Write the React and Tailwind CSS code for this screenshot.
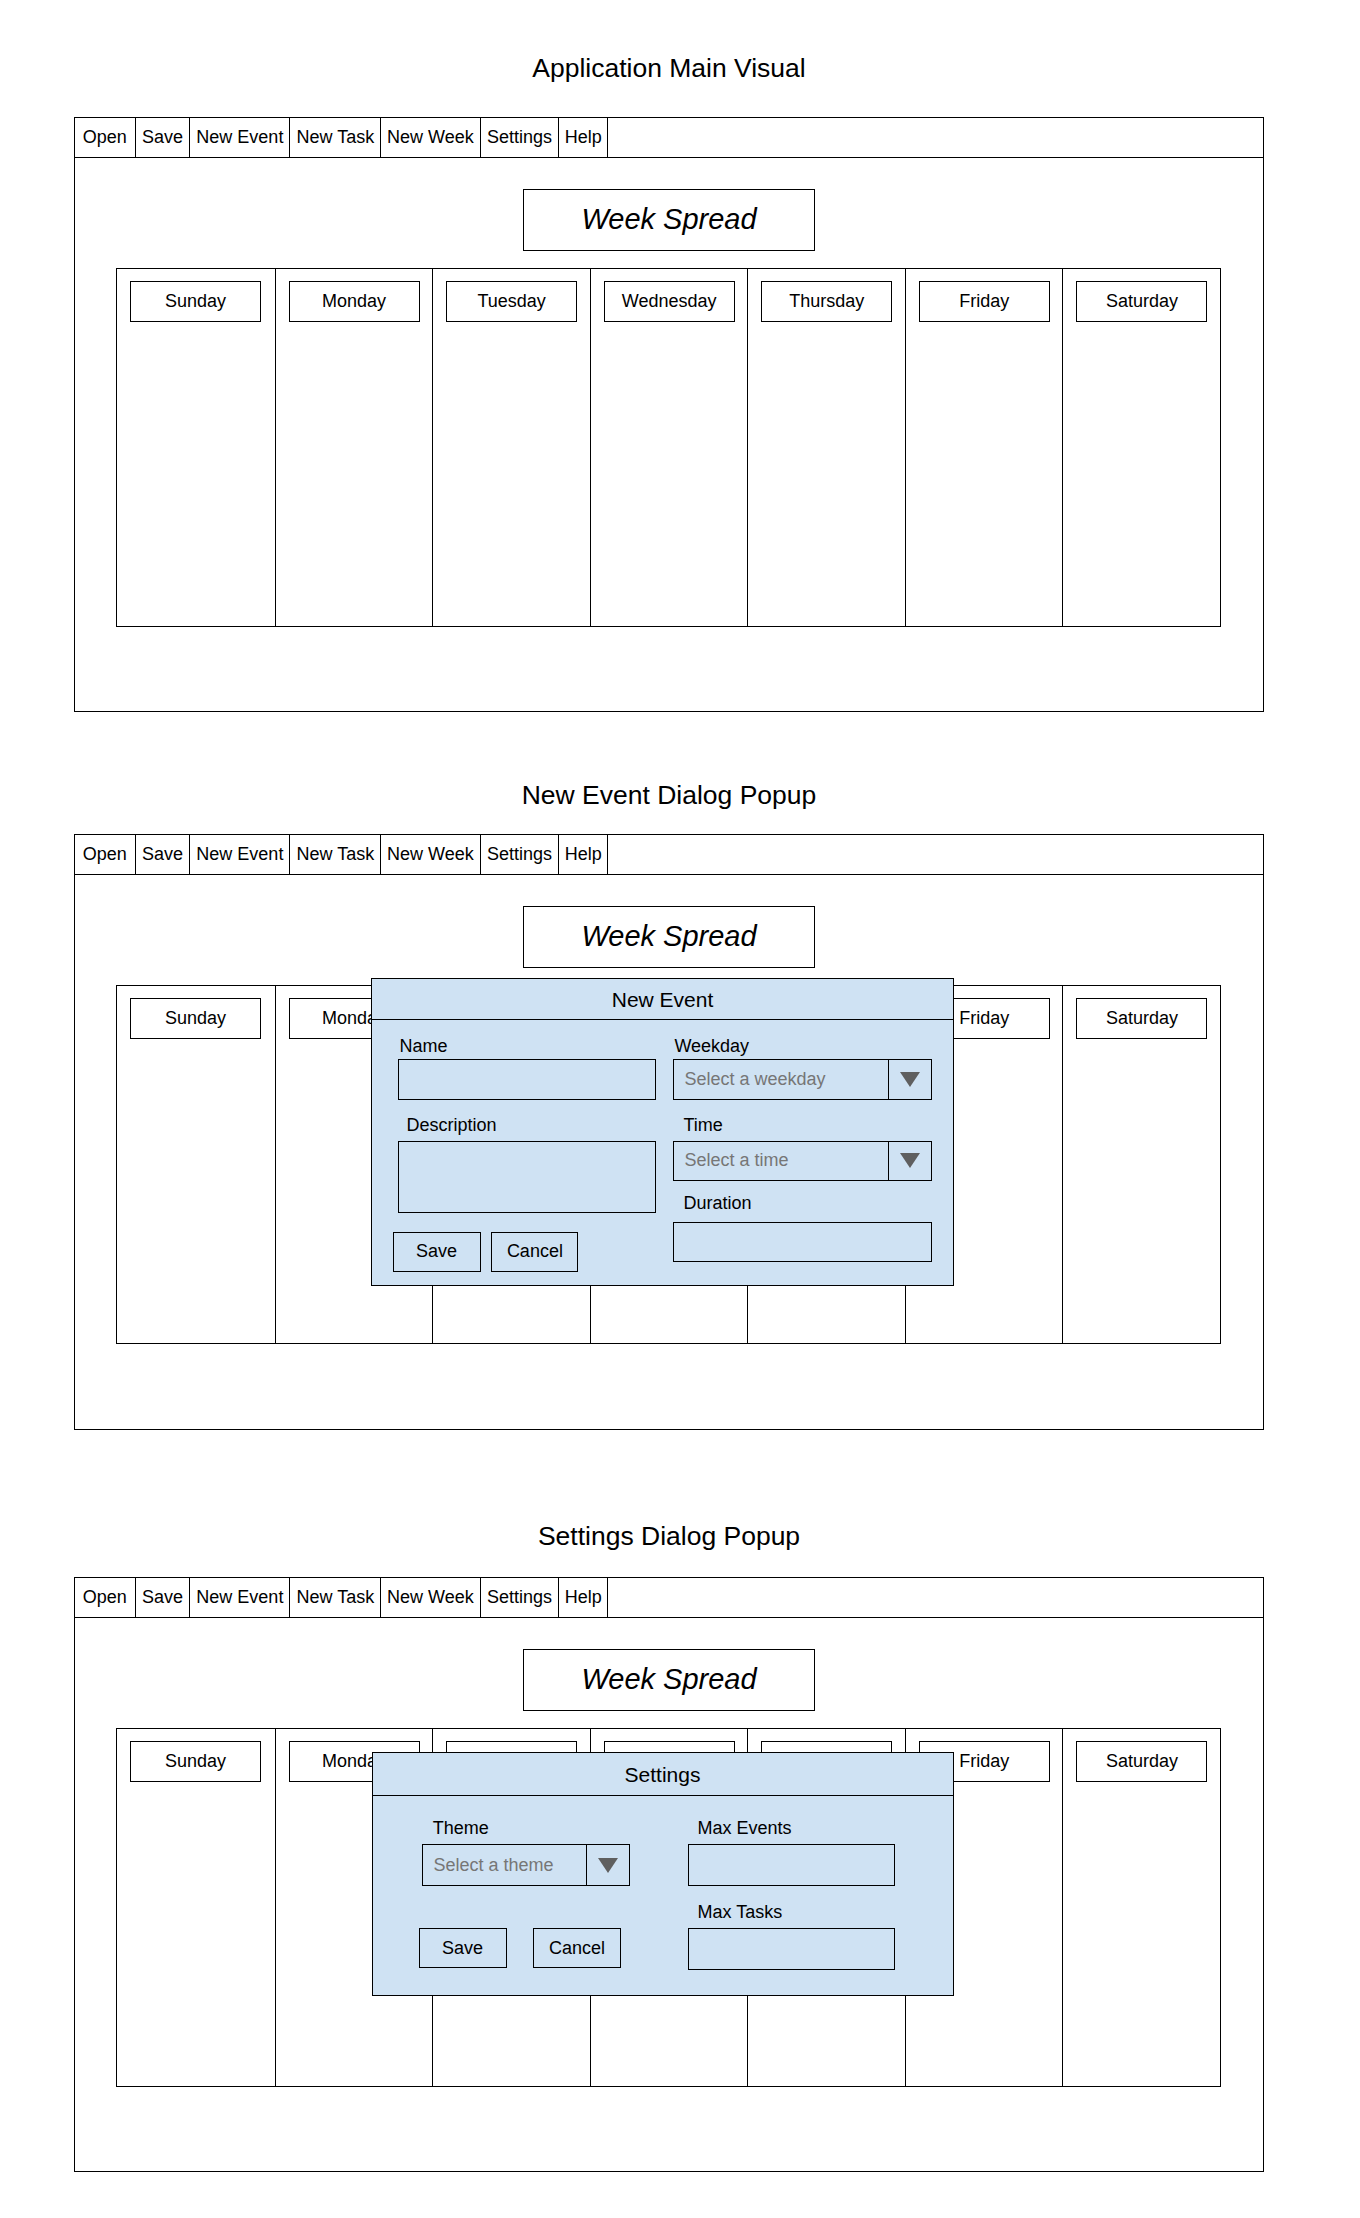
import React from "react";

const menu = [
  ["Open", "w-[60.7px]"],
  ["Save", "w-[54.7px]"],
  ["New Event", "w-[100px]"],
  ["New Task", "w-[91px]"],
  ["New Week", "w-[99.2px]"],
  ["Settings", "w-[78.8px]"],
  ["Help", "w-[48.6px]"],
];

const days = ["Sunday", "Monday", "Tuesday", "Wednesday", "Thursday", "Friday", "Saturday"];

function Triangle() {
  return (
    <svg width="20" height="15" viewBox="0 0 20 15">
      <polygon points="0,0 20,0 10,15" fill="#5f5f5f" />
    </svg>
  );
}

function Select({ placeholder, className }) {
  return (
    <div className={`flex border border-black ${className}`}>
      <div className="flex-1 flex items-center pl-[10px] text-[18px] text-[#767676] whitespace-nowrap overflow-hidden">
        {placeholder}
      </div>
      <div className="w-[43px] border-l border-black flex items-center justify-center">
        <Triangle />
      </div>
    </div>
  );
}

function Button({ children, className }) {
  return (
    <div className={`border border-black flex items-center justify-center text-[18px] ${className}`}>
      {children}
    </div>
  );
}

function Label({ children, className }) {
  return <div className={`h-[20px] leading-[20px] text-[18px] whitespace-nowrap ${className}`}>{children}</div>;
}

function Frame({ height, children }) {
  return (
    <div className={`relative ml-[74px] w-[1190px] ${height} border border-black`}>
      <div className="flex h-[40px] border-b border-black">
        {menu.map(([label, w]) => (
          <div
            key={label}
            className={`${w} h-full border-r border-black flex items-center justify-center text-[18px] whitespace-nowrap`}
          >
            {label}
          </div>
        ))}
      </div>
      <div className="mt-[31px] mx-auto w-[292px] h-[62px] border border-black flex items-center justify-center italic text-[29px]">
        Week Spread
      </div>
      <div className="mt-[17px] ml-[41px] w-[1105px] h-[359px] border border-black grid grid-cols-7">
        {days.map((d, i) => (
          <div key={d} className={i ? "border-l border-black" : ""}>
            <div className="mt-[12px] ml-[13px] w-[131px] h-[41px] border border-black flex items-center justify-center text-[18px]">
              {d}
            </div>
          </div>
        ))}
      </div>
      {children}
    </div>
  );
}

function Title({ children, className }) {
  return (
    <div className={`ml-[74px] w-[1190px] h-[30px] leading-[30px] text-[26.5px] text-center ${className}`}>
      {children}
    </div>
  );
}

function NewEventDialog() {
  return (
    <div className="absolute left-[296px] top-[143.3px] w-[583px] h-[308px] border border-black bg-[#cfe2f3] flex flex-col">
      <div className="h-[41px] shrink-0 border-b border-black flex items-center justify-center text-[21px]">
        New Event
      </div>
      <div className="flex">
        <div className="ml-[25.5px] w-[258.3px] flex flex-col">
          <Label className="mt-[15.3px] pl-[2px]">Name</Label>
          <div className="mt-[3.7px] h-[41px] border border-black" />
          <Label className="mt-[14.3px] pl-[9px]">Description</Label>
          <div className="mt-[6.1px] h-[72.6px] border border-black" />
          <div className="mt-[18.4px] -ml-[5px] flex">
            <Button className="w-[88px] h-[40.6px]">Save</Button>
            <Button className="ml-[10.8px] w-[87.2px] h-[40.6px]">Cancel</Button>
          </div>
        </div>
        <div className="ml-[17.6px] w-[258.4px] flex flex-col">
          <Label className="mt-[15.3px] pl-[1px]">Weekday</Label>
          <Select placeholder="Select a weekday" className="mt-[3.7px] h-[41px]" />
          <Label className="mt-[14.3px] pl-[10px]">Time</Label>
          <Select placeholder="Select a time" className="mt-[6.1px] h-[40.6px]" />
          <Label className="mt-[12px] pl-[10px]">Duration</Label>
          <div className="mt-[8.4px] h-[40.6px] border border-black" />
        </div>
      </div>
    </div>
  );
}

function SettingsDialog() {
  return (
    <div className="absolute left-[296.5px] top-[174px] w-[582px] h-[244px] border border-black bg-[#cfe2f3] flex flex-col">
      <div className="h-[43px] shrink-0 border-b border-black flex items-center justify-center pt-[2px] text-[21px]">
        Settings
      </div>
      <div className="flex">
        <div className="ml-[49.9px] w-[207.4px] flex flex-col">
          <Label className="mt-[22px] pl-[10.3px]">Theme</Label>
          <Select placeholder="Select a theme" className="mt-[6px] h-[42px]" />
          <div className="mt-[42px] -ml-[3.8px] flex">
            <Button className="w-[88px] h-[40.4px]">Save</Button>
            <Button className="ml-[26.8px] w-[87.2px] h-[40.4px]">Cancel</Button>
          </div>
        </div>
        <div className="ml-[58.6px] w-[206.2px] flex flex-col">
          <Label className="mt-[22px] pl-[9.1px]">Max Events</Label>
          <div className="mt-[6px] h-[42px] border border-black" />
          <Label className="mt-[16px] pl-[9.1px]">Max Tasks</Label>
          <div className="mt-[6px] h-[42px] border border-black" />
        </div>
      </div>
    </div>
  );
}

export default function App() {
  return (
    <div className="w-[1360px] h-[2218px] bg-white text-black font-['Liberation_Sans',Arial,sans-serif] pt-[53px] overflow-hidden">
      <Title>Application Main Visual</Title>
      <div className="mt-[34px]">
        <Frame height="h-[595px]" />
      </div>
      <Title className="mt-[68px]">New Event Dialog Popup</Title>
      <div className="mt-[24px]">
        <Frame height="h-[596px]">
          <NewEventDialog />
        </Frame>
      </div>
      <Title className="mt-[91px]">Settings Dialog Popup</Title>
      <div className="mt-[26px]">
        <Frame height="h-[595px]">
          <SettingsDialog />
        </Frame>
      </div>
    </div>
  );
}
